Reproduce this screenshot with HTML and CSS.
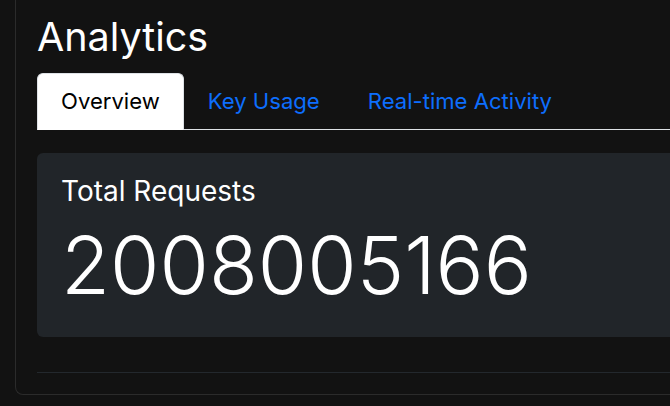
FILE: index.html
```html
<!DOCTYPE html>
<html lang="en">
<head>
<meta charset="utf-8">
<title>Analytics</title>
<link rel="stylesheet" href="styles.css">
</head>
<body>
<div class="panel">
  <h1 class="title">Analytics</h1>
  <ul class="tabs">
    <li><a class="tab active" href="#">Overview</a></li>
    <li><a class="tab" href="#">Key Usage</a></li>
    <li><a class="tab" href="#">Real-time Activity</a></li>
  </ul>
  <div class="stat-card">
    <h3 class="stat-label">Total Requests</h3>
    <div class="stat-value">2008005166</div>
  </div>
  <div class="divider"></div>
</div>
</body>
</html>
```
FILE: styles.css
```css
html, body {
  margin: 0;
  padding: 0;
  background: #121212;
  overflow: hidden;
}
body {
  font-family: Inter, "Noto Sans", sans-serif;
  color: #fff;
}
.panel {
  margin-left: 15px;
  margin-right: -60px;
  border-left: 1px solid #2b2b2b;
  border-bottom: 1px solid #2b2b2b;
  border-bottom-left-radius: 8px;
  padding: 13px 0 21px 21px;
}
.title {
  margin: 0 0 12px;
  font-size: 39.5px;
  font-weight: 400;
  line-height: 48px;
}
.tabs {
  list-style: none;
  margin: 0 0 23px;
  padding: 0;
  display: flex;
  border-bottom: 1px solid #dee2e6;
}
.tab {
  display: block;
  padding: 10.7px 23px;
  font-size: 22.1px;
  line-height: 33.6px;
  color: #0d6efd;
  text-decoration: none;
  border: 1px solid transparent;
  border-top-left-radius: 6px;
  border-top-right-radius: 6px;
  margin-bottom: -1px;
}
.tab.active {
  background: #fff;
  color: #000;
  border-color: #dee2e6 #dee2e6 #fff;
}
.stat-card {
  background: #212529;
  border-radius: 6px;
  padding: 22px 24px 24.4px;
}
.stat-label {
  margin: 0 0 8px;
  font-size: 28px;
  font-weight: 400;
  line-height: 1.2;
}
.stat-value {
  font-size: 80px;
  font-weight: 300;
  line-height: 1.2;
}
.divider {
  margin-top: 35px;
  border-top: 1px solid #23282d;
}
```
